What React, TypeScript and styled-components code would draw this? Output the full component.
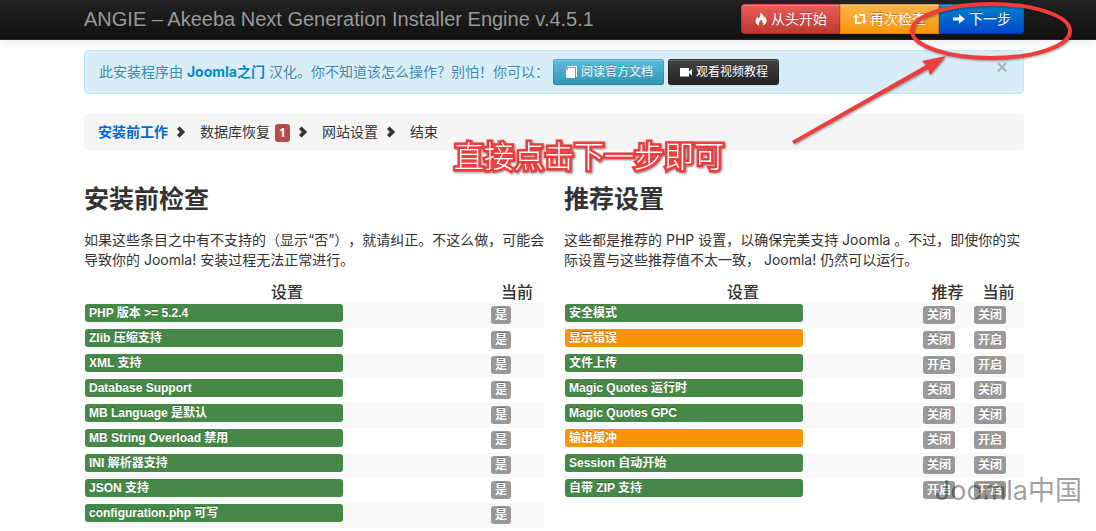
import React from "react";
import styled, { createGlobalStyle, css } from "styled-components";

const uiFont = `Inter, "Noto Sans CJK SC", sans-serif`;
const labelFont = `"Liberation Sans", "Noto Sans CJK SC", sans-serif`;

const GlobalStyle = createGlobalStyle`
  *, *::before, *::after { box-sizing: border-box; }
  body {
    margin: 0;
    background: #fff;
    color: #333;
    font: 14px/20px ${uiFont};
    text-spacing-trim: space-all;
  }
`;

const Page = styled.div`
  position: relative;
  overflow: hidden;
`;

const Container = styled.div`
  max-width: 952px;
  margin: 0 auto;
  padding-left: 12px;
`;

const Header = styled.header`
  height: 40px;
  background: linear-gradient(#222, #111);
  border-bottom: 1px solid #252525;
  box-shadow: 0 1px 10px rgba(0, 0, 0, 0.1);
`;

const HeaderRow = styled(Container)`
  display: flex;
  justify-content: space-between;
  align-items: flex-start;
`;

const Brand = styled.span`
  padding: 9px 0 10px;
  color: #999;
  font: 20px/20px ${labelFont};
  white-space: nowrap;
`;

const ButtonGroup = styled.div`
  display: flex;
  margin-top: 4px;

  > button:first-child { border-radius: 4px 0 0 4px; }
  > button:last-child { border-radius: 0 4px 4px 0; }
`;

type Tone = "danger" | "warning" | "primary" | "info" | "inverse";

const tones: Record<Tone, [string, string]> = {
  danger: ["#ee5f5b", "#bd362f"],
  warning: ["#fbb450", "#f89406"],
  primary: ["#0088cc", "#0044cc"],
  info: ["#5bc0de", "#2f96b4"],
  inverse: ["#444444", "#222222"],
};

const Button = styled.button<{ $tone: Tone; $small?: boolean }>`
  display: inline-flex;
  align-items: center;
  gap: 3px;
  height: 30px;
  padding: 0 12px;
  border: 1px solid rgba(0, 0, 0, 0.12);
  border-radius: 0;
  color: #fff;
  font: 14px/20px ${uiFont};
  text-shadow: 0 -1px 0 rgba(0, 0, 0, 0.25);
  white-space: nowrap;
  background: linear-gradient(${p => tones[p.$tone][0]}, ${p => tones[p.$tone][1]}) border-box;
  box-shadow: inset 0 1px 0 rgba(255, 255, 255, 0.2), 0 1px 2px rgba(0, 0, 0, 0.05);
  cursor: pointer;

  ${p =>
    p.$small &&
    css`
      height: 26px;
      padding: 0 10px;
      border-radius: 3px;
      font-size: 12px;
    `}
`;

const Alert = styled.div`
  display: flex;
  align-items: center;
  height: 44px;
  margin: 10px 0 20px;
  padding: 0 15px 0 14px;
  border: 1px solid #bce8f1;
  border-radius: 4px;
  background: #d9edf7;
  color: #3a87ad;
  text-shadow: 0 1px 0 rgba(255, 255, 255, 0.5);
`;

const AlertText = styled.span`
  margin-right: 4px;
  white-space: nowrap;

  a {
    color: #0088cc;
    font-weight: 700;
    text-decoration: none;
  }
`;

const AlertActions = styled.div`
  display: flex;
  gap: 4px;
`;

const Close = styled.button`
  align-self: flex-start;
  margin: 6px 0 0 auto;
  padding: 0;
  border: 0;
  background: none;
  color: #000;
  opacity: 0.22;
  font: 700 20px/20px ${labelFont};
  cursor: pointer;
`;

const Steps = styled.ol`
  display: flex;
  align-items: center;
  height: 36px;
  margin: 0 0 30px;
  padding: 0 14px;
  border-radius: 4px;
  background: #f5f5f5;
  list-style: none;
  text-shadow: 0 1px 0 #fff;
`;

const Step = styled.li<{ $active?: boolean }>`
  display: flex;
  align-items: center;
  margin-right: 14px;
  white-space: nowrap;
  ${p => p.$active && css`color: #0069cc; font-weight: 700;`}

  > svg {
    margin-left: 8px;
    color: #333;
  }
`;

const Count = styled.span`
  width: 15px;
  height: 18px;
  margin: 1px 0 0 5px;
  border-radius: 3px;
  background: #b94a48;
  color: #fff;
  font: 700 12px/18px "Open Sans", sans-serif;
  text-align: center;
  text-shadow: 0 -1px 0 rgba(0, 0, 0, 0.25);
`;

const Columns = styled.main`
  display: grid;
  grid-template-columns: 1fr 1fr;
  gap: 20px;
`;

const Title = styled.h3`
  margin: 0 0 12px;
  font: 700 25px/38px ${uiFont};
`;

const Intro = styled.p`
  margin: 0 -4px 12px 0;
`;

const Table = styled.table`
  width: 100%;
  border-collapse: collapse;
  table-layout: fixed;

  th {
    height: 21px;
    padding: 0;
    font: 500 16px/18px "Noto Sans CJK SC", sans-serif;
    vertical-align: top;
  }
  td {
    height: 25px;
    padding: 1px;
    vertical-align: top;
  }
  tbody tr:nth-child(odd) { background: #f9f9f9; }
`;

const Col = styled.col<{ $width?: number }>`
  ${p => p.$width && css`width: ${p.$width}px;`}
`;

const labelStyle = css`
  display: block;
  height: 18px;
  border-radius: 3px;
  color: #fff;
  font: 700 12px/18px ${labelFont};
  text-shadow: 0 -1px 0 rgba(0, 0, 0, 0.25);
  white-space: nowrap;
`;

const Label = styled.span<{ $warn?: boolean; $wide?: boolean }>`
  ${labelStyle}
  width: ${p => (p.$wide ? 258 : 238)}px;
  padding: 0 4px;
  background: ${p => (p.$warn ? "#f89406" : "#468847")};
`;

const Value = styled.span`
  ${labelStyle}
  width: fit-content;
  margin-top: 2px;
  padding: 0 4px;
  background: #999;
`;

/* Layer for the notes and the watermark that lie over the page */
const Overlay = styled.div`
  position: absolute;
  top: 0;
  left: 0;
  right: 0;
  max-width: 952px;
  height: 0;
  margin: 0 auto;
  pointer-events: none;
`;

const Marks = styled.svg`
  position: absolute;
  top: 0;
  right: -72px;
  width: 300px;
  height: 150px;
  filter: drop-shadow(1px 1px 1px rgba(0, 0, 0, 0.4));
`;

const Callout = styled.strong`
  position: absolute;
  top: 136px;
  left: 382px;
  color: #fff;
  font: 300 30px/36px "Noto Sans CJK SC", sans-serif;
  white-space: nowrap;
  -webkit-text-stroke: 5px #f03c3c;
  paint-order: stroke fill;
  filter: drop-shadow(1px 1px 1px rgba(0, 0, 0, 0.5));
`;

const Watermark = styled.div`
  position: absolute;
  top: 473px;
  right: -58px;
  color: rgba(0, 0, 0, 0.4);
  font: 27px/36px ${uiFont};
  white-space: nowrap;
`;

const Icon = ({ children }: { children: React.ReactNode }) => (
  <svg width="14" height="14" viewBox="0 0 14 14" fill="currentColor" aria-hidden="true">
    {children}
  </svg>
);

const FireIcon = () => (
  <Icon>
    <path d="M5.600 13.600C2.800 13 1.400 11.200 1.500 9c.1-2 1.300-2.900 1.800-4.500.8.8.9 1.800.8 2.600C6 5.600 6.900 3 5.900.4c2.700 1.200 4 3.300 3.700 5.600.6-.5.8-1.200.7-2 1.500 1.500 2.400 3.300 2.200 5.200-.2 2.300-1.800 3.900-4.300 4.400 1.200-.9 1.600-2 1.200-3.300-.3.600-.7.900-1.200 1 .3-1.700-.1-3-1.400-4C7 9 5.300 9.500 4.900 11c-.3 1 0 1.900.7 2.600z" />
  </Icon>
);

const LoopIcon = () => (
  <Icon>
    <path d="M3 2 6 5.500H4V10h3.500L9 12H2V5.500H0zM5.500 2H12v6.500h2L11 12 8 8.500h2V4H7z" />
  </Icon>
);

const ArrowIcon = () => (
  <Icon>
    <path d="M1 5.500h6V2.300L13 7l-6 4.700V8.500H1z" />
  </Icon>
);

const CopyIcon = () => (
  <Icon>
    <path d="M3 1h10v11h-1V2H3zM4 3h7v10H2V5h2zM2 4.200 3.200 3v1.200z" />
  </Icon>
);

const VideoIcon = () => (
  <Icon>
    <path d="M1 3h9v8.500H1zM10 6.500l3-2.500v6.500l-3-2.500z" />
  </Icon>
);

const ChevronIcon = () => (
  <svg width="10" height="12" viewBox="0 0 10 12" fill="currentColor" aria-hidden="true">
    <path d="M3.500.5 9.200 6l-5.700 5.500L1 9l3-3-3-3z" />
  </svg>
);

const checks = [
  "PHP 版本 >= 5.2.4",
  "Zlib 压缩支持",
  "XML 支持",
  "Database Support",
  "MB Language 是默认",
  "MB String Overload 禁用",
  "INI 解析器支持",
  "JSON 支持",
  "configuration.php 可写",
];

const settings: { name: string; wanted: string; current: string; warn?: boolean }[] = [
  { name: "安全模式", wanted: "关闭", current: "关闭" },
  { name: "显示错误", wanted: "关闭", current: "开启", warn: true },
  { name: "文件上传", wanted: "开启", current: "开启" },
  { name: "Magic Quotes 运行时", wanted: "关闭", current: "关闭" },
  { name: "Magic Quotes GPC", wanted: "关闭", current: "关闭" },
  { name: "输出缓冲", wanted: "关闭", current: "开启", warn: true },
  { name: "Session 自动开始", wanted: "关闭", current: "关闭" },
  { name: "自带 ZIP 支持", wanted: "开启", current: "开启" },
];

export default function App() {
  return (
    <Page>
      <GlobalStyle />
      <Header>
        <HeaderRow>
          <Brand>ANGIE – Akeeba Next Generation Installer Engine v.4.5.1</Brand>
          <ButtonGroup>
            <Button $tone="danger"><FireIcon />从头开始</Button>
            <Button $tone="warning"><LoopIcon />再次检查</Button>
            <Button $tone="primary"><ArrowIcon />下一步</Button>
          </ButtonGroup>
        </HeaderRow>
      </Header>

      <Container>
        <Alert>
          <AlertText>
            此安装程序由 <a href="#joomla">Joomla之门</a> 汉化。你不知道该怎么操作？别怕！你可以：
          </AlertText>
          <AlertActions>
            <Button $tone="info" $small><CopyIcon />阅读官方文档</Button>
            <Button $tone="inverse" $small><VideoIcon />观看视频教程</Button>
          </AlertActions>
          <Close aria-label="关闭">×</Close>
        </Alert>

        <Steps>
          <Step $active>安装前工作<ChevronIcon /></Step>
          <Step>数据库恢复<Count>1</Count><ChevronIcon /></Step>
          <Step>网站设置<ChevronIcon /></Step>
          <Step>结束</Step>
        </Steps>

        <Columns>
          <section>
            <Title>安装前检查</Title>
            <Intro>
              如果这些条目之中有不支持的（显示“否”），就请纠正。不这么做，可能会导致你的 Joomla! 安装过程无法正常进行。
            </Intro>
            <Table>
              <colgroup><Col /><Col $width={54} /></colgroup>
              <thead>
                <tr><th>设置</th><th>当前</th></tr>
              </thead>
              <tbody>
                {checks.map(name => (
                  <tr key={name}>
                    <td><Label $wide>{name}</Label></td>
                    <td><Value>是</Value></td>
                  </tr>
                ))}
              </tbody>
            </Table>
          </section>

          <section>
            <Title>推荐设置</Title>
            <Intro>
              这些都是推荐的 PHP 设置，以确保完美支持 Joomla 。不过，即使你的实际设置与这些推荐值不太一致， Joomla! 仍然可以运行。
            </Intro>
            <Table>
              <colgroup><Col /><Col $width={51} /><Col $width={51} /></colgroup>
              <thead>
                <tr><th>设置</th><th>推荐</th><th>当前</th></tr>
              </thead>
              <tbody>
                {settings.map(s => (
                  <tr key={s.name}>
                    <td><Label $warn={s.warn}>{s.name}</Label></td>
                    <td><Value>{s.wanted}</Value></td>
                    <td><Value>{s.current}</Value></td>
                  </tr>
                ))}
              </tbody>
            </Table>
          </section>
        </Columns>
      </Container>

      <Overlay>
        <Callout>直接点击下一步即可</Callout>
        <Marks viewBox="796 0 300 150" overflow="visible" aria-hidden="true">
          <ellipse cx="991" cy="31" rx="79" ry="27" fill="none" stroke="#f03c3c" strokeWidth="4" />
          <path d="M792 141 926 65 922 61 946 56 930 75 928 69 794 144z" fill="#f03c3c" />
        </Marks>
        <Watermark>Joomla中国</Watermark>
      </Overlay>
    </Page>
  );
}
